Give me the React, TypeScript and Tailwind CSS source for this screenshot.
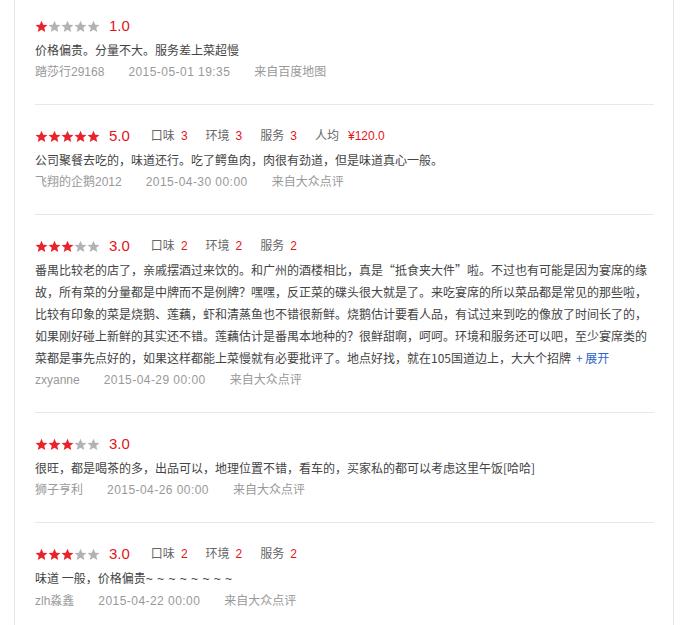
import type { ReactNode } from "react";

type Review = {
  score: number;
  subs?: { label: string; value: string }[];
  text: ReactNode;
  user: string;
  time: string;
  source: string;
};

const reviews: Review[] = [
  {
    score: 1,
    text: "价格偏贵。分量不大。服务差上菜超慢",
    user: "踏莎行29168",
    time: "2015-05-01 19:35",
    source: "来自百度地图",
  },
  {
    score: 5,
    subs: [
      { label: "口味", value: "3" },
      { label: "环境", value: "3" },
      { label: "服务", value: "3" },
      { label: "人均", value: "¥120.0" },
    ],
    text: "公司聚餐去吃的，味道还行。吃了鳄鱼肉，肉很有劲道，但是味道真心一般。",
    user: "飞翔的企鹅2012",
    time: "2015-04-30 00:00",
    source: "来自大众点评",
  },
  {
    score: 3,
    subs: [
      { label: "口味", value: "2" },
      { label: "环境", value: "2" },
      { label: "服务", value: "2" },
    ],
    text: (
      <>
        番禺比较老的店了，亲戚摆酒过来饮的。和广州的酒楼相比，真是“抵食夹大件”啦。不过也有可能是因为宴席的缘故，所有菜的分量都是中牌而不是例牌？嘿嘿，反正菜的碟头很大就是了。来吃宴席的所以菜品都是常见的那些啦，比较有印象的菜是烧鹅、莲藕，虾和清蒸鱼也不错很新鲜。烧鹅估计要看人品，有试过来到吃的像放了时间长了的，如果刚好碰上新鲜的其实还不错。莲藕估计是番禺本地种的？很鲜甜啊，呵呵。环境和服务还可以吧，至少宴席类的菜都是事先点好的，如果这样都能上菜慢就有必要批评了。地点好找，就在105国道边上，大大个招牌
        <a className="ml-[5px] inline-block cursor-pointer text-[#2e64c8]">+ 展开</a>
      </>
    ),
    user: "zxyanne",
    time: "2015-04-29 00:00",
    source: "来自大众点评",
  },
  {
    score: 3,
    text: "很旺，都是喝茶的多，出品可以，地理位置不错，看车的，买家私的都可以考虑这里午饭[哈哈]",
    user: "狮子亨利",
    time: "2015-04-26 00:00",
    source: "来自大众点评",
  },
  {
    score: 3,
    subs: [
      { label: "口味", value: "2" },
      { label: "环境", value: "2" },
      { label: "服务", value: "2" },
    ],
    text: (
      <>
        味道 一般，价格偏贵
        <span className="font-['Liberation_Sans',sans-serif] tracking-[0.5px]">~ ~ ~ ~ ~ ~ ~ ~</span>
      </>
    ),
    user: "zlh淼鑫",
    time: "2015-04-22 00:00",
    source: "来自大众点评",
  },
];

function Star({ on }: { on: boolean }) {
  return (
    <svg viewBox="0 0 24 24" className="h-[13px] w-[13px]">
      <path
        d="M12 1.5l3.2 7.1 7.8.7-5.9 5.2 1.8 7.6L12 18.1l-6.9 4 1.8-7.6L1 9.3l7.8-.7z"
        fill={on ? "#e8232b" : "#b3b3b3"}
      />
    </svg>
  );
}

function ReviewItem({ review }: { review: Review }) {
  return (
    <li className="border-b border-[#e8e8e8] pt-[18px] pb-[21px] leading-[22px] first:pt-[13px] last:border-b-0">
      <div className="flex h-[26px] items-center">
        <div className="flex">
          {[1, 2, 3, 4, 5].map((i) => (
            <Star key={i} on={i <= review.score} />
          ))}
        </div>
        <span className="ml-[9px] text-[15px] text-[#e4141b]">
          {review.score.toFixed(1)}
        </span>
        {review.subs && (
          <div className="ml-[21px] flex gap-[18px] text-[12px]">
            {review.subs.map((s) => (
              <span key={s.label} className="text-[#666]">
                {s.label}
                <span
                  className={
                    s.value.startsWith("¥")
                      ? "ml-[9px] text-[#e4141b]"
                      : "ml-[6px] text-[#e4141b]"
                  }
                >
                  {s.value}
                </span>
              </span>
            ))}
          </div>
        )}
      </div>
      <p className="font-['Noto_Sans_CJK_SC','Liberation_Sans',sans-serif] text-[12px] text-[#444]">
        {review.text}
      </p>
      <div className="flex gap-6 text-[12px] text-[#999]">
        <span>{review.user}</span>
        <span className="tracking-[0.45px]">{review.time}</span>
        <span>{review.source}</span>
      </div>
    </li>
  );
}

export default function App() {
  return (
    <div className="min-h-[625px] bg-white font-['Liberation_Sans','Noto_Sans_CJK_SC',sans-serif]">
      <div className="ml-[14px] min-h-[625px] w-[660px] border-x border-[#e6e6e6] pl-5 pr-[19px]">
        <ul>
          {reviews.map((r, i) => (
            <ReviewItem key={i} review={r} />
          ))}
        </ul>
      </div>
    </div>
  );
}
